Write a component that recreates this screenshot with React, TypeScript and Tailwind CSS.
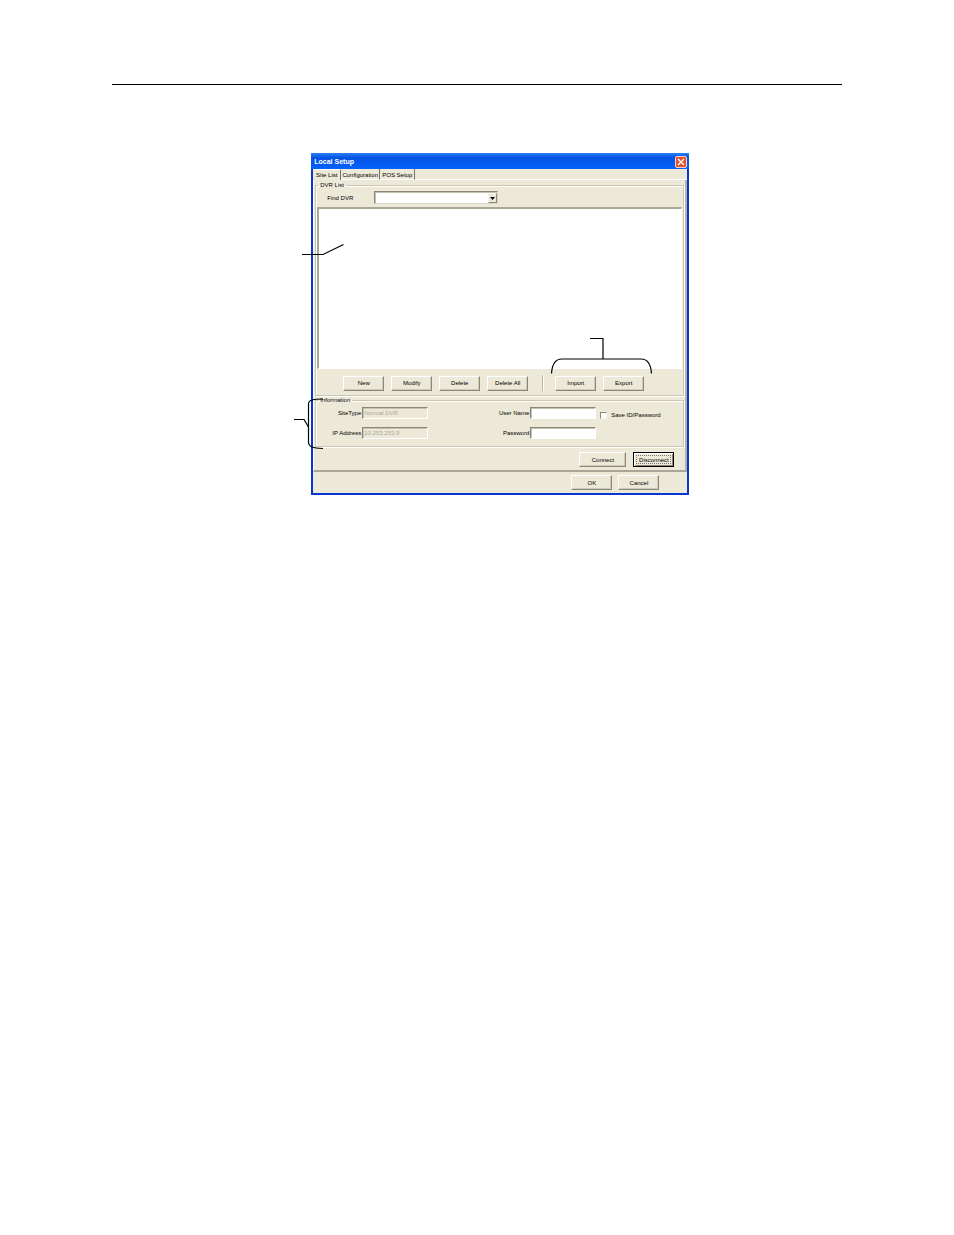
import type { ReactNode } from "react";

function PushButton({ children, wide = false }: { children: ReactNode; wide?: boolean }) {
  return (
    <button
      type="button"
      className={`${wide ? "w-[47px]" : "w-[41px]"} flex h-[15px] shrink-0 items-center justify-center border border-t-white border-l-white border-r-[#8a8778] border-b-[#8a8778] bg-[#ece9d8] shadow-[inset_-1px_-1px_0_#cfccba]`}
    >
      {children}
    </button>
  );
}

function Field({ id, label, value, disabled = false }: { id: string; label: string; value?: string; disabled?: boolean }) {
  return (
    <div className="flex h-3 items-center justify-end gap-px">
      <label htmlFor={id}>{label}</label>
      <input
        id={id}
        type={id === "password" ? "password" : "text"}
        defaultValue={value}
        disabled={disabled}
        className={`${disabled ? "bg-[#ece9d8] text-[#aca899]" : "bg-white"} h-3 w-[66px] border border-t-[#8a8778] border-l-[#8a8778] border-r-white border-b-white px-px shadow-[inset_1px_1px_0_#c5c2b2] outline-none`}
      />
    </div>
  );
}

const groupBox =
  "border border-[#cac7b7] shadow-[1px_1px_0_#fffef8,inset_1px_1px_0_#fffef8]";

function Callouts() {
  return (
    <svg
      aria-hidden="true"
      className="pointer-events-none absolute top-0 -left-5 h-[342px] w-[398px]"
      viewBox="291 153 398 342"
      fill="none"
      stroke="#000"
      strokeWidth="1.2"
    >
      <path d="M302 254.5H323L343.500 244.500" />
      <path d="M590 338.500H603V359" />
      <path d="M551.500 373.500C552 365 555 359 562 359H641C648 359 651 366 651.500 373.500" />
      <path d="M323 399C313 399 308.500 400 308.500 404V442C308.500 447 313 448 323 448.500" />
      <path d="M294 419.500H304L308.500 427" />
    </svg>
  );
}

function LocalSetup() {
  return (
    <section
      aria-label="Local Setup"
      className="flex flex-col bg-[#0a36d0] px-[2px] pb-[2px] font-['Liberation_Sans',Arial,sans-serif] text-[6px] leading-[8px] text-black"
    >
      <header className="-mx-[2px] flex h-4 items-center justify-between bg-linear-to-b from-[#2a80f4] via-[#0453e4] via-30% to-[#0562fb] pt-px pr-[2px] pl-[3px]">
        <h1 className="text-[7px] font-bold text-white">Local Setup</h1>
        <button
          type="button"
          aria-label="Close"
          className="flex h-3 w-3 items-center justify-center rounded-[2px] border border-[#f3d5d0] bg-[#e2532f]"
        >
          <svg viewBox="0 0 8 8" className="h-2 w-2" stroke="#fff" strokeWidth="1.4">
            <path d="M1 1L7 7M7 1L1 7" />
          </svg>
        </button>
      </header>

      <div className="bg-[#ece9d8]">
        <div role="tablist" className="flex h-[11px] whitespace-nowrap">
          <button role="tab" aria-selected="true" type="button" className="w-7 border-t border-r border-t-white border-r-[#77756a]">
            Site List
          </button>
          <button role="tab" aria-selected="false" type="button" className="w-[39px] border-r border-b border-r-[#77756a] border-b-white pt-[2px]">
            Configuration
          </button>
          <button role="tab" aria-selected="false" type="button" className="w-[35px] border-r border-b border-r-[#77756a] border-b-white pt-[2px]">
            POS Setup
          </button>
          <span className="flex-1 border-b border-white" />
        </div>

        <div role="tabpanel" className="flex flex-col border-r-2 border-b-2 border-l border-l-white border-r-[#b5b2a2] border-b-[#a9a698] px-px">
          <fieldset className={`mt-px flex flex-col ${groupBox}`}>
            <legend className="ml-[2px] px-[2px]">DVR List</legend>
            <div className="flex items-center pt-[2px] pl-[11px]">
              <label htmlFor="find-dvr" className="w-[47px]">Find DVR</label>
              <div className="relative h-[13px] w-[124px]">
                <select
                  id="find-dvr"
                  className="h-full w-full appearance-none border border-t-[#8a8778] border-l-[#8a8778] border-r-[#d9d6c8] border-b-[#d9d6c8] bg-white shadow-[inset_1px_1px_0_#c5c2b2] outline-none"
                >
                  <option></option>
                </select>
                <span className="pointer-events-none absolute top-[2px] right-px flex h-[10px] w-[9px] items-center justify-center border border-t-[#f5f3ea] border-l-[#f5f3ea] border-r-[#8a8778] border-b-[#8a8778] bg-[#ece9d8]">
                  <svg viewBox="0 0 5 3" className="h-[3px] w-[5px]" fill="#000">
                    <path d="M0 0H5L2.500 3Z" />
                  </svg>
                </span>
              </div>
            </div>
            <div role="listbox" aria-label="DVR List" className="mx-px mt-[3px] h-[162px] border-t-2 border-l-2 border-r border-b border-t-[#aaa799] border-l-[#aaa799] border-r-white border-b-white bg-white" />
            <div className="flex items-center gap-[7px] pt-[6px] pb-1 pl-[27px]">
              <PushButton>New</PushButton>
              <PushButton>Modify</PushButton>
              <PushButton>Delete</PushButton>
              <PushButton>Delete All</PushButton>
              <span className="mr-1 ml-[7px] h-4 w-[2px] border-r border-l border-l-[#bab7a8] border-r-white" />
              <PushButton>Import</PushButton>
              <PushButton>Export</PushButton>
            </div>
          </fieldset>

          <fieldset className={groupBox}>
            <legend className="ml-[2px] px-[2px]">Information</legend>
            <div className="flex pt-[3px] pb-[7px] pl-px">
              <div className="flex w-[111px] flex-col gap-2">
                <Field id="site-type" label="SiteType" value="Normal DVR" disabled />
                <Field id="ip-address" label="IP Address" value="10.253.253.9" disabled />
              </div>
              <div className="flex w-[168px] flex-col gap-2">
                <Field id="user-name" label="User Name" />
                <Field id="password" label="Password" />
              </div>
              <div className="flex h-4 items-center gap-1 pl-1">
                <input
                  id="save-login"
                  type="checkbox"
                  className="h-[7px] w-[7px] appearance-none border border-t-[#8a8778] border-l-[#8a8778] border-r-[#f5f3ea] border-b-[#f5f3ea] bg-white checked:bg-[#333]"
                />
                <label htmlFor="save-login">Save ID/Password</label>
              </div>
            </div>
          </fieldset>

          <div className="flex justify-end gap-[7px] pt-[5px] pr-[10px] pb-[3px]">
            <PushButton wide>Connect</PushButton>
            <button
              type="button"
              className="flex h-[15px] w-[41px] items-center justify-center border border-black bg-[#ece9d8] shadow-[inset_1px_1px_0_#fff,inset_-1px_-1px_0_#8a8778]"
            >
              <span className="flex h-[9px] w-[35px] items-center justify-center border border-dotted border-[#777]">Disconnect</span>
            </button>
          </div>
        </div>

        <footer className="flex justify-end gap-[6px] pt-[3px] pr-7 pb-[3px]">
          <PushButton>OK</PushButton>
          <PushButton>Cancel</PushButton>
        </footer>
      </div>
    </section>
  );
}

export default function App() {
  return (
    <main className="min-h-screen bg-white px-28 pt-21">
      <hr className="border-t border-black" />
      <figure className="relative mt-17 ml-[27.3%] w-[51.8%] min-w-[378px]">
        <LocalSetup />
        <Callouts />
      </figure>
    </main>
  );
}
